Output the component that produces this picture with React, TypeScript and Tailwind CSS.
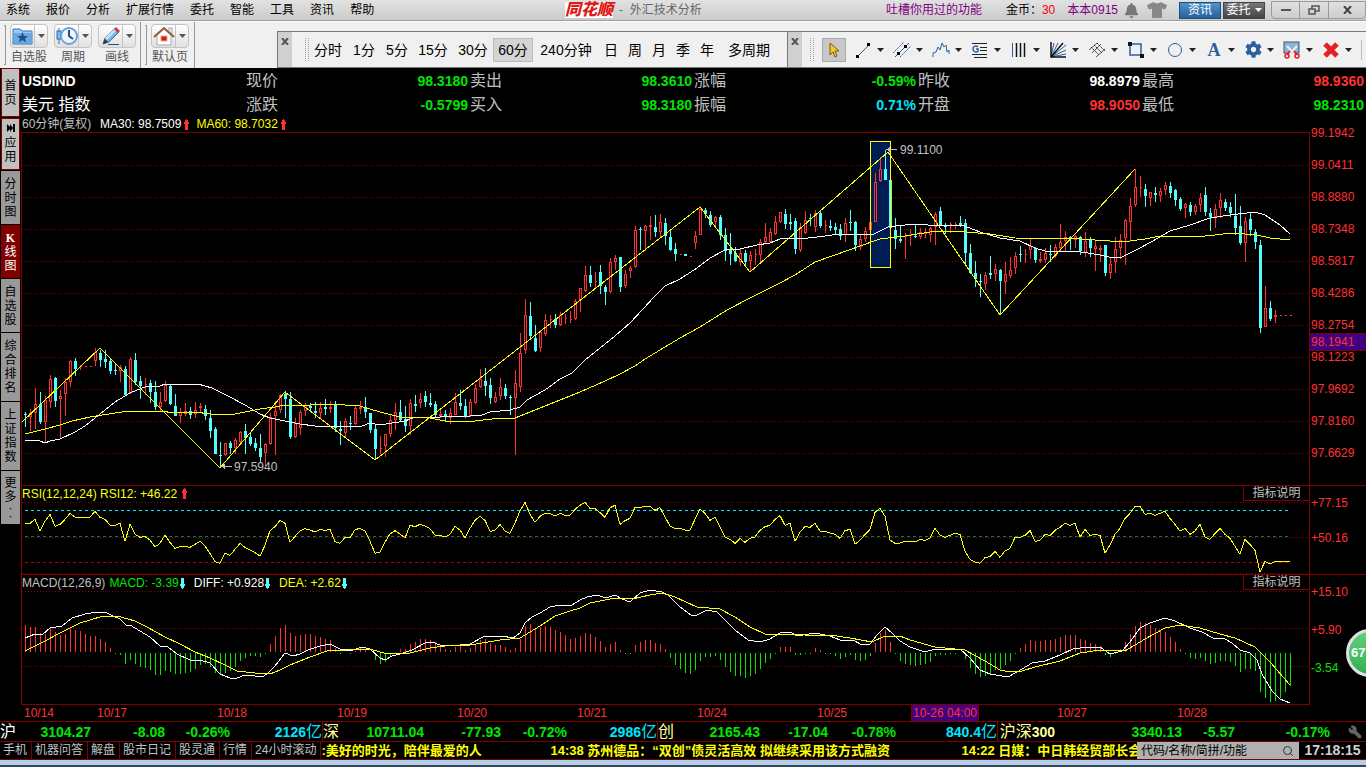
import type { ReactNode } from 'react';
import { Search, Wrench } from 'lucide-react';
import { FaBell, FaCog, FaTshirt } from 'react-icons/fa';

const BAR_STEP = 5;
const FIRST_BAR = 25;

// u = close above open, d = close below open; then high, body top, body bottom, low
const CANDLES = `
d412,414,415,427 u409,413,417,431 u388,404,413,429 d392,404,422,424 u396,400,422,442
u375,379,402,408 d377,378,401,407 u390,396,399,439 u378,382,394,416 u360,361,382,387
d358,361,369,376 u365,366,367,370 u366,366,367,367 u366,366,367,367 u348,352,361,366
d350,353,360,367 d350,359,362,368 d358,361,371,374 d363,370,371,375 u365,367,371,382
d366,369,395,395 u357,359,393,394 d353,360,382,385 d376,381,386,399 u378,384,385,395
d380,383,392,403 d381,392,407,410 u392,402,407,411 u381,385,401,402 d385,386,404,405
d394,406,416,416 u408,412,416,423 u403,411,414,416 d407,411,415,419 u402,410,414,418
u403,406,408,413 d405,409,416,420 d410,418,431,438 d427,429,454,454 d442,455,456,467
u443,443,455,456 d441,443,448,454 u438,440,448,454 u431,432,442,444 d424,431,438,454
d432,437,444,446 d438,443,448,451 d434,448,457,462 u443,444,453,466 u413,417,444,445
u401,411,416,455 u394,395,410,413 d391,394,399,418 d392,399,437,439 u418,423,437,438
u410,412,428,435 u403,405,411,416 d403,406,408,412 d402,411,413,418 u402,408,413,418
d399,407,409,415 u401,407,409,413 d401,404,428,432 d421,429,431,445 u418,421,433,438
d416,423,424,430 u405,408,424,425 u401,407,409,414 d397,408,412,418 d413,413,430,433
d424,429,449,460 u436,448,449,454 u434,434,446,457 u415,420,434,437 u403,412,420,430
d400,412,420,422 d406,419,426,432 u399,403,426,435 d395,404,406,412 u393,399,403,408
d391,396,402,407 d393,403,405,407 d401,404,415,417 u408,414,416,418 d410,414,417,422
u408,413,418,424 u393,402,415,415 d390,403,406,410 d399,406,417,418 u399,402,416,417
u384,388,403,404 u369,379,387,388 d368,381,386,396 d378,385,398,404 u392,397,402,403
u378,387,396,400 d384,388,396,399 d395,397,398,415 u370,383,398,455 u333,353,387,392
u299,315,350,354 d302,316,336,338 d325,338,351,352 u330,332,348,352 u314,320,334,336
u315,319,320,328 d314,319,325,328 u312,315,325,326 u314,318,319,324 u311,319,320,323
u299,301,319,320 u288,288,300,312 u266,275,291,292 d266,275,283,287 u272,281,282,289
d265,272,286,294 d285,287,292,305 u258,262,292,293 u255,258,262,270 d257,257,287,292
u270,274,286,288 u266,268,271,278 u226,230,267,268 d227,229,230,250 u225,226,231,251
u216,225,227,240 d215,227,232,237 u214,222,232,237 d218,223,236,245 d229,237,250,251
d243,249,254,261 u254,254,255,255 d254,254,256,256 u256,256,257,257 u231,236,243,249
u206,209,235,235 d208,210,214,218 d211,215,225,227 u216,217,222,227 d215,217,235,240
d228,235,251,261 d233,250,254,265 d247,253,261,262 u249,253,262,266 d250,253,262,267
u251,255,261,272 u249,254,255,265 u239,242,255,264 u223,237,242,243 u228,232,242,243
u216,222,234,235 u212,212,222,223 d209,214,224,229 d214,222,224,230 d218,221,249,254
u223,227,250,252 u211,220,233,234 d214,218,219,226 u210,213,227,232 d211,213,226,228
u220,225,226,233 d220,226,228,231 d223,227,230,234 d224,229,236,240 u218,223,235,242
d210,222,223,231 d221,222,245,251 u235,239,247,250 u227,231,239,242 u221,222,230,232
u173,182,222,222 u157,169,181,182 d150,169,180,180 d180,180,228,232 d218,230,239,249
d226,239,241,243 u233,236,237,259 u229,235,236,246 d224,236,237,238 u228,232,237,239
u228,232,234,238 u227,228,235,242 u212,214,227,245 d207,211,225,226 d223,225,227,234
u222,224,225,233 u222,224,225,229 d216,223,225,227 d219,223,253,266 d244,253,273,274
d261,273,279,287 d274,281,282,297 u272,275,284,290 d256,273,275,279 u264,269,274,281
d269,270,281,315 u262,274,282,294 u257,270,276,278 u252,256,268,274 d246,254,255,262
u249,254,255,263 u239,246,250,259 d247,248,260,263 u252,259,261,263 u248,253,260,263
d245,254,255,262 u244,247,256,258 u224,242,248,252 u231,237,241,251 d236,237,238,250
u235,236,240,248 d236,237,251,255 u232,241,253,257 d237,239,248,257 u240,246,249,271
u245,248,250,262 d245,245,273,276 u257,264,273,279 u237,249,262,273 u234,240,248,259
u219,220,238,265 u198,206,222,241 u169,187,205,207 u176,187,188,197 d184,189,196,207
u192,192,198,206 d187,193,195,202 u188,191,196,202 u182,185,190,195 d182,186,193,198
d189,190,200,206 d197,199,209,211 u203,204,208,218 d202,205,212,216 u204,206,212,215
u193,198,205,212 d187,195,212,216 d208,213,217,231 u204,209,217,228 u193,200,208,218
d199,202,208,211 d202,207,213,217 d194,216,228,235 d206,226,243,245 u217,221,243,262
d213,219,230,236 d229,232,242,249 d240,245,328,333 u286,308,327,327 d301,308,319,321
u310,315,317,323 u315,315,316,316 u315,315,316,316 u315,315,316,316
`.trim().split(/\s+/).map((item) => ({
  up: item[0] === 'u',
  y: item.slice(1).split(',').map(Number),
}));

const MA30 = '25,440 40,441 45,443 50,441 60,439 75,432 85,426 95,418 105,410 115,402 130,393 137,390 145,387 160,386 165,384 198,384 212,388 230,397 245,405 260,414 270,418 285,421 300,424 315,426 330,426 350,427 362,426 370,423 380,425 405,421 415,417 440,417 470,416 482,415 490,412 510,410 520,407 527,400 545,390 560,379 572,373 585,360 600,348 615,336 630,323 643,309 655,296 665,286 680,279 697,268 710,258 725,250 740,249 757,245 770,243 780,239 790,238 800,239 825,236 840,234 855,234 872,235 888,227 905,225 915,224 940,226 962,225 980,232 1000,238 1020,241 1035,248 1045,251 1075,251 1100,255 1113,258 1122,257 1140,248 1160,237 1170,231 1190,225 1210,218 1230,215 1255,212 1265,215 1280,225 1290,234';
const MA60 = '25,434 45,429 60,425 72,421 90,417 115,413 130,411 160,411 175,413 195,412 210,414 235,414 260,409 275,407 285,405 310,405 325,404 345,405 360,406 380,412 400,417 425,417 445,421 475,421 500,418 515,418 530,412 545,406 565,398 580,392 605,381 620,374 635,366 645,359 660,350 680,338 700,327 727,310 750,298 780,283 795,275 815,262 835,255 860,246 880,239 905,236 930,232 955,231 990,234 1015,238 1080,239 1110,241 1120,242 1130,241 1145,239 1160,236 1195,237 1215,235 1232,233 1257,235 1270,238 1290,240';
const ZIGZAG = '22,422 100,348 220,468 285,392 375,460 700,207 750,272 888,152 1000,315 1135,169';
const DIFF = '25,638 35,634 42,635 50,628 62,626 72,618 85,614 98,612 105,612 113,616 120,619 126,625 130,625 140,631 150,637 160,646 168,647 177,654 190,660 200,660 210,663 220,674 230,678 237,678 245,675 255,676 262,677 267,674 275,666 285,653 293,656 300,654 308,650 320,646 330,644 340,649 350,651 362,647 370,649 380,658 385,660 392,656 400,654 412,650 425,643 432,642 440,645 450,646 460,645 470,644 485,636 493,637 502,636 513,638 520,633 525,623 532,617 540,613 550,607 560,605 572,605 580,600 587,597 597,595 606,598 615,595 622,599 630,602 640,593 650,590 662,592 668,595 680,607 691,615 697,615 707,610 717,612 725,620 735,630 748,640 760,642 770,639 780,633 790,632 797,636 815,633 830,636 840,640 853,640 862,645 870,644 877,635 885,627 892,633 900,641 910,647 925,652 935,649 960,649 970,658 980,670 990,674 1008,677 1017,672 1032,663 1045,661 1060,655 1075,648 1080,648 1100,647 1110,654 1122,651 1130,642 1140,628 1150,623 1165,618 1175,621 1190,628 1202,632 1213,638 1225,639 1232,643 1240,650 1250,653 1257,660 1262,674 1272,691 1280,699 1290,703';
const DEA = '25,651 45,641 60,633 80,623 90,620 103,616 117,616 135,621 147,627 165,637 180,644 195,652 210,658 225,665 237,671 255,673 270,674 280,670 290,665 310,657 330,650 345,650 370,649 387,654 410,653 430,648 445,646 470,645 500,640 520,638 540,626 555,616 570,611 580,608 590,603 605,600 615,598 632,599 650,595 662,593 675,597 697,607 720,609 735,617 750,627 765,634 775,635 790,634 805,635 830,635 850,638 872,642 885,636 900,636 910,640 935,647 965,650 985,661 1000,670 1010,672 1022,671 1035,667 1060,661 1080,653 1100,650 1125,651 1145,639 1165,628 1180,625 1200,628 1220,634 1235,638 1255,647 1270,662 1290,685';

// one sample per bar, in thirds of a pixel
const RSI = [
  130, 130, 118, 153, 124, 103, 139, 133, 118, 100, 111, 111, 111, 111, 94, 112, 118, 135, 136, 130, 184, 133, 163, 172, 170, 180, 201, 190, 165,
  187, 205, 200, 200, 202, 193, 184, 198, 220, 245, 250, 220, 226, 208, 190, 202, 210, 218, 228, 196, 152, 140, 121, 130, 187, 169, 153, 146, 150,
  156, 148, 151, 148, 185, 190, 172, 174, 149, 145, 153, 184, 220, 216, 186, 162, 152, 162, 174, 136, 140, 133, 138, 146, 165, 166, 171, 163, 139,
  150, 174, 145, 121, 109, 121, 154, 151, 133, 153, 160, 129, 93, 67, 103, 127, 109, 100, 100, 108, 100, 106, 106, 88, 76, 67, 85, 86, 98, 112, 83,
  76, 133, 122, 115, 82, 82, 79, 79, 91, 83, 111, 138, 145, 145, 150, 150, 118, 88, 100, 121, 112, 142, 171, 178, 190, 175, 187, 175, 171, 151, 140,
  136, 118, 107, 136, 130, 184, 157, 139, 142, 130, 153, 154, 159, 163, 175, 152, 148, 192, 181, 163, 148, 97, 85, 109, 180, 190,
  189, 184, 184, 186, 179, 181, 174, 145, 165, 172, 166, 160, 163, 214, 238, 246, 250, 233, 230, 214, 232, 213, 205, 172, 172, 166, 151, 184, 181,
  163, 166, 151, 142, 130, 136, 130, 171, 148, 166, 163, 166, 219, 195, 163, 145, 115, 100, 79, 79, 103, 100, 106, 100, 94, 115, 133, 153, 145, 163,
  153, 133, 171, 178, 160, 145, 163, 175, 199, 223, 178, 193, 211, 276, 244, 252, 244, 244, 244, 244,
];

const MACD = [
  435, 441, 441, 460, 462, 443, 457, 464, 462, 448, 451, 453, 463, 468, 468, 478, 487, 504, 519, 525, 552, 540, 552, 560, 564, 570, 585, 585, 573,
  576, 582, 582, 579, 576, 567, 555, 552, 560, 579, 585, 579, 573, 560, 543, 534, 528, 528, 531, 522, 492, 468, 444, 435, 459, 468, 465, 462, 462,
  468, 471, 477, 480, 504, 521, 516, 521, 512, 505, 507, 516, 540, 552, 546, 531, 520, 507, 507, 492, 486, 477, 477, 480, 486, 498, 507, 510, 501,
  498, 510, 504, 495, 480, 477, 489, 495, 495, 501, 510, 504, 477, 438, 432, 444, 441, 438, 441, 450, 456, 465, 477, 474, 468, 459, 462, 471, 483,
  501, 492, 486, 510, 519, 522, 495, 486, 480, 480, 489, 492, 507, 534, 555, 567, 579, 582, 570, 543, 531, 531, 528, 540, 561, 576, 588, 588, 594,
  588, 582, 567, 549, 537, 519, 501, 501, 501, 525, 525, 522, 521, 504, 510, 521, 522, 528, 537, 531, 525, 540, 543, 540, 528, 489, 459, 450, 486,
  522, 543, 552, 555, 558, 555, 552, 546, 528, 525, 525, 522, 521, 516, 537, 564, 582, 591, 588, 582, 570, 567, 555, 543, 522, 504, 492, 480, 483,
  483, 480, 480, 477, 471, 465, 465, 465, 477, 480, 489, 492, 498, 525, 531, 522, 508, 486, 462, 438, 426, 429, 435, 444, 453, 456, 471, 486, 507,
  519, 534, 537, 534, 543, 552, 549, 543, 543, 546, 558, 576, 567, 567, 573, 636, 654, 666, 663, 654, 636, 618,
];

const priceAxis = ['99.1942', '99.0411', '98.8880', '98.7348', '98.5817', '98.4286', '98.2754', '98.1223', '97.9692', '97.8160', '97.6629'];

const menus = ['系统', '报价', '分析', '扩展行情', '委托', '智能', '工具', '资讯', '帮助'];

const periods = [
  { name: '分时', cls: 'w-[38px]' },
  { name: '1分', cls: 'w-[34px]' },
  { name: '5分', cls: 'w-8' },
  { name: '15分', cls: 'w-10' },
  { name: '30分', cls: 'w-10' },
  { name: '60分', cls: 'w-10' },
  { name: '240分钟', cls: 'w-[66px]' },
  { name: '日', cls: 'w-6' },
  { name: '周', cls: 'w-6' },
  { name: '月', cls: 'w-6' },
  { name: '季', cls: 'w-6' },
  { name: '年', cls: 'w-6' },
  { name: '多周期', cls: 'w-[60px]' },
];

const sideTabs = [
  { name: '首页', cls: 'h-[49px] bg-[#c0c0c0] border border-[#800000] text-black' },
  { name: '应用', cls: 'h-[52px] bg-[#c0c0c0] border border-[#800000] text-black' },
  { name: '分时图', cls: 'h-[53px] bg-[#999] text-black' },
  { name: 'K线图', cls: 'h-[53px] bg-[#800000] text-white' },
  { name: '自选股', cls: 'h-[53px] bg-[#999] text-black' },
  { name: '综合排名', cls: 'h-[68px] bg-[#999] text-black' },
  { name: '上证指数', cls: 'h-[68px] bg-[#999] text-black' },
  { name: '更多··', cls: 'h-[53px] bg-[#999] text-black' },
];

const quotes = [
  ['现价', '98.3180', 'text-[#00e600]'],
  ['卖出', '98.3610', 'text-[#00e600]'],
  ['涨幅', '-0.59%', 'text-[#00e600]'],
  ['昨收', '98.8979', 'text-white'],
  ['最高', '98.9360', 'text-[#ff3232]'],
  ['涨跌', '-0.5799', 'text-[#00e600]'],
  ['买入', '98.3180', 'text-[#00e600]'],
  ['振幅', '0.71%', 'text-[#00e6ff]'],
  ['开盘', '98.9050', 'text-[#ff3232]'],
  ['最低', '98.2310', 'text-[#00e600]'],
];

const dates = [
  { name: '10/14', cls: 'w-[73px]' },
  { name: '10/17', cls: 'w-[120px]' },
  { name: '10/18', cls: 'w-[120px]' },
  { name: '10/19', cls: 'w-[120px]' },
  { name: '10/20', cls: 'w-[120px]' },
  { name: '10/21', cls: 'w-[120px]' },
  { name: '10/24', cls: 'w-[120px]' },
  { name: '10/25', cls: 'w-[94px]' },
];

const tickerLinks = ['手机', '机器问答', '解盘', '股市日记', '股灵通', '行情', '24小时滚动'];

function Grip() {
  return (
    <svg width="5" height="24" className="shrink-0" shapeRendering="crispEdges">
      <path d="M1.5 0V24M4.5 0V24" stroke="#a0a0a0" strokeDasharray="1 1" />
    </svg>
  );
}

function Caret() {
  return (
    <svg width="7" height="4" viewBox="0 0 7 4" className="shrink-0">
      <path d="M0 0H7L3.5 4Z" fill="currentColor" />
    </svg>
  );
}

function Arrow({ down = false }: { down?: boolean }) {
  return (
    <svg width="7" height="12" viewBox="0 0 7 12" shapeRendering="crispEdges" className={down ? 'rotate-180 text-[#54fcfc]' : 'text-[#ff3232]'}>
      <path d="M3 0H4V1H5V3H6V5H5V11H2V5H1V3H2V1H3Z" fill="currentColor" />
    </svg>
  );
}

function ToolButton({ label, children }: { label: string; children: ReactNode }) {
  return (
    <button className="flex flex-col items-center text-[#555]">
      <span className="flex h-6 w-[38px] border border-[#c4c4c4] rounded-sm bg-gradient-to-b from-white to-[#e0e0e0]">
        <span className="flex-1 flex items-center justify-center border-r border-[#c4c4c4]">{children}</span>
        <span className="w-3 flex items-center justify-center"><Caret /></span>
      </span>
      <span className="text-[12px] leading-[18px]">{label}</span>
    </button>
  );
}

function FolderIcon() {
  return (
    <svg width="22" height="20" viewBox="0 0 22 20">
      <path d="M1 3H8L10 5H20V18H1Z" fill="#9cc8f2" stroke="#3c78b4" />
      <path d="M2 7H19V17H2Z" fill="#69a9e6" />
      <path d="M10.500 6L12 10H16L13 12.500L14 16.500L10.500 14L7 16.500L8 12.500L5 10H9Z" fill="#1d4f8c" />
    </svg>
  );
}

function ClockIcon() {
  return (
    <svg width="22" height="20" viewBox="0 0 22 20">
      <path d="M3 2V18" stroke="#2b6cb0" />
      <rect x="1" y="5" width="4" height="8" fill="#7ab8f0" stroke="#2b6cb0" />
      <circle cx="13" cy="10" r="8" fill="#eef6fd" stroke="#6ba4da" strokeWidth="2" />
      <path d="M13 4V10L17 13" fill="none" stroke="#2a4f7c" strokeWidth="2" />
    </svg>
  );
}

function PencilIcon() {
  return (
    <svg width="22" height="20" viewBox="0 0 22 20">
      <path d="M3 18L5 12L15 2L19 6L9 16Z" fill="#76b1ea" stroke="#3f6c9b" />
      <path d="M5 12L15 2L17 4L7 14Z" fill="#c5e2fb" />
      <path d="M14 3L16 1L20 5L18 7Z" fill="#d33" />
      <path d="M3 18L5 13L8 16Z" fill="#333" />
      <path d="M8 18.500H19" stroke="#1f4f86" />
    </svg>
  );
}

function HomeIcon() {
  return (
    <svg width="22" height="20" viewBox="0 0 22 20">
      <path d="M4 9L11 3L18 9V19H4Z" fill="#fff" stroke="#aaa" />
      <rect x="16" y="2" width="3" height="5" fill="#eee" stroke="#aaa" />
      <path d="M1 11L11 2L21 11" fill="none" stroke="#9a5a3c" strokeWidth="2" />
      <rect x="8" y="10" width="6" height="5" fill="#cc2200" stroke="#e9a793" />
    </svg>
  );
}

const drawTools: { name: string; icon: ReactNode }[] = [
  { name: '线段', icon: <><path d="M4 15L15 4" stroke="#2b5f9e" /><path d="M2 14H5V17H2ZM13 2H16V5H13Z" fill="#000" /></> },
  { name: '平行线', icon: <><path d="M0 12L11 1M7 16L18 5" stroke="#2b5f9e" strokeDasharray="2 1" /><path d="M2 16L16 2" stroke="#2b5f9e" /><path d="M4 11H7V14H4ZM11 4H14V7H11Z" fill="#000" /></> },
  { name: '波浪', icon: <path d="M1 16V12L4 11L6 6L8 9L10 2L12 6L14 4L15 11L17 9V13" fill="none" stroke="#2b5f9e" /> },
  { name: '黄金分割', icon: <><path d="M1 2.500H16M9 6.500H16M9 9.500H16M1 13.500H16M3 16.500H16" stroke="#222" /><path d="M7 6C5 4 2 5 2 8C2 11 6 12 7 10V8H5" fill="none" stroke="#2b5f9e" strokeWidth="1.500" /></> },
  { name: '周期线', icon: <><path d="M2.500 2V16" stroke="#2b5f9e" /><path d="M6.500 2V16M10.500 2V16M14.500 2V16" stroke="#111" strokeWidth="1.500" /></> },
  { name: '角度线', icon: <><path d="M2 16L5 2M2 16L9 2M2 16L17 4M2 16L17 9M2 16L17 13" stroke="#2b5f9e" /><path d="M2 1V16H17M2 16L14 2" fill="none" stroke="#111" strokeWidth="1.500" /></> },
  { name: '回归通道', icon: <><path d="M1 9L9 2M4 12L13 3M8 16L17 8" stroke="#555" /><path d="M3 6L11 14M6 4L14 12M9 2L17 10" stroke="#222" strokeDasharray="2 1" /></> },
  { name: '矩形', icon: <><rect x="3" y="3" width="11" height="11" fill="none" stroke="#2b5f9e" strokeWidth="1.500" /><path d="M1 1H5V5H1ZM13 13H17V17H13Z" fill="#111" /></> },
  { name: '圆形', icon: <circle cx="9" cy="9" r="6.500" fill="none" stroke="#2b5f9e" /> },
];

function DrawButton({ name, children }: { name: string; children: ReactNode }) {
  return (
    <button aria-label={name} className="w-[39px] h-6 flex items-center gap-1 pl-[3px] shrink-0 text-[#222]">
      <span className="w-5 flex justify-center">{children}</span>
      <Caret />
    </button>
  );
}

function TitleBar() {
  return (
    <header className="relative h-[21px] flex items-center justify-between bg-gradient-to-b from-[#e2e2e2] to-[#cbcbcb] border-b border-[#a0a0a0] text-[12px] leading-5">
      <nav className="flex gap-4 pl-1.5">
        {menus.map((m) => <button key={m}>{m}</button>)}
      </nav>
      <div className="absolute left-[565px] top-0 flex items-center gap-1.5 text-[#666]">
        <span className="w-12 h-4 bg-white text-center text-[16px] leading-[15px] font-black italic text-[#e01818]">同花顺</span>
        <span>-&nbsp; 外汇技术分析</span>
      </div>
      <div className="flex items-center h-5">
        <a href="#feedback" className="text-[#800080] mr-6">吐槽你用过的功能</a>
        <span className="mr-3 flex">金币：<span className="text-[#f00]">30</span></span>
        <a href="#user" className="text-[#800080] mr-1.5">本本0915</a>
        <button aria-label="消息" className="text-[#777] mr-2"><FaBell size={15} /></button>
        <button aria-label="皮肤" className="text-[#888] mr-3"><FaTshirt size={20} /></button>
        <button className="w-[42px] h-[17px] bg-gradient-to-b from-[#4f94cd] to-[#24619d] border border-[#1e4e7c] text-white leading-[15px] mr-0.5">资讯</button>
        <button className="w-[42px] h-[17px] bg-gradient-to-b from-[#777] to-[#444] border border-[#444] text-white leading-[15px] flex items-center justify-center gap-1 mr-1.5">委托<Caret /></button>
        <div className="flex h-[18px] border border-[#999] rounded-b-sm text-[#555]">
          <button aria-label="最小化" className="w-7 border-r border-[#999] flex items-center justify-center"><span className="w-2.5 h-0.5 bg-[#555]" /></button>
          <button aria-label="还原" className="w-[29px] border-r border-[#999] flex items-center justify-center">
            <svg width="12" height="10" viewBox="0 0 12 10"><path d="M1 4H7V9H1ZM4 4V1H11V6H7" fill="none" stroke="#555" strokeWidth="1.500" /></svg>
          </button>
          <button aria-label="关闭" className="w-9 flex items-center justify-center">
            <svg width="9" height="8" viewBox="0 0 9 8"><path d="M1 0L8 8M8 0L1 8" stroke="#444" strokeWidth="2" /></svg>
          </button>
        </div>
      </div>
    </header>
  );
}

function CloseStrip() {
  return (
    <button aria-label="关闭工具栏" className="w-[15px] shrink-0 h-full bg-[#d0d0d0] border-l border-[#777] flex justify-center pt-1.5">
      <svg width="8" height="7" viewBox="0 0 8 7"><path d="M1 0L7 7M7 0L1 7" stroke="#555" strokeWidth="2" /></svg>
    </button>
  );
}

function ToolBar() {
  return (
    <div className="h-[47px] bg-[#f0f0f0] border-t border-white flex items-end">
      <div className="h-full flex items-center shrink-0">
        <div className="w-[141px] h-full flex items-center pl-1 gap-[6px] border-r border-[#999]">
          <span className="w-0.5 h-10 -mr-0.5 border-y border-r border-[#999]" />
          <ToolButton label="自选股"><FolderIcon /></ToolButton>
          <ToolButton label="周期"><ClockIcon /></ToolButton>
          <ToolButton label="画线"><PencilIcon /></ToolButton>
        </div>
        <div className="w-[54px] h-full flex items-center pl-1 gap-1 border-r border-[#999]">
          <span className="w-0.5 h-10 border-y border-r border-[#999]" />
          <ToolButton label="默认页"><HomeIcon /></ToolButton>
        </div>
      </div>
      <div className="ml-[82px] h-[37px] flex-1 flex items-center border-y border-[#777]">
        <CloseStrip />
        <div className="w-[17px] flex justify-end shrink-0"><Grip /></div>
        <div className="flex items-center shrink-0 h-full text-[14px] leading-6">
          {periods.map((p) => (
            <button key={p.name} className={`${p.cls} text-center whitespace-nowrap ${p.name === '60分' ? 'bg-[#d4d4d4] outline outline-[#bbb] -outline-offset-1' : ''}`}>{p.name}</button>
          ))}
        </div>
        <div className="w-2 shrink-0" />
        <CloseStrip />
        <div className="w-3 flex justify-end shrink-0"><Grip /></div>
        <button aria-label="选择" className="ml-2 w-6 h-6 shrink-0 border border-[#aaa] bg-[#c8c8c8] flex items-center justify-center">
          <svg width="12" height="16" viewBox="0 0 12 16"><path d="M2 1V13L5 10L7 15L9 14L7 9H11Z" fill="#f2c62c" stroke="#7a5a10" /></svg>
        </button>
        <div className="flex ml-1">
          {drawTools.map((t) => (
            <DrawButton key={t.name} name={t.name}>
              <svg width="18" height="18" viewBox="0 0 18 18">{t.icon}</svg>
            </DrawButton>
          ))}
          <DrawButton name="文字"><span className="font-['Liberation_Serif',serif] font-bold text-[18px] leading-5 text-[#2b5f9e]">A</span></DrawButton>
          <DrawButton name="设置"><FaCog size={17} className="text-[#2b5f9e]" /></DrawButton>
          <DrawButton name="截图">
            <svg width="18" height="18" viewBox="0 0 18 18">
              <rect x="1" y="1" width="15" height="11" fill="#8fb4d9" stroke="#456" />
              <path d="M4 5L13 15M14 5L5 15" stroke="#eee" strokeWidth="2" />
              <path d="M7 10L4 14M11 10L14 14" stroke="#d22" strokeWidth="2" />
              <circle cx="4" cy="15" r="2" fill="none" stroke="#d22" strokeWidth="1.500" />
              <circle cx="14" cy="15" r="2" fill="none" stroke="#d22" strokeWidth="1.500" />
            </svg>
          </DrawButton>
          <DrawButton name="删除">
            <svg width="16" height="16" viewBox="0 0 16 16"><path d="M2 2L14 14M14 2L2 14" stroke="#e32222" strokeWidth="5" /></svg>
          </DrawButton>
        </div>
        <span className="w-px h-5 ml-auto mr-1 bg-[#bbb]" />
      </div>
    </div>
  );
}

function SideBar() {
  return (
    <aside className="w-[21px] shrink-0 flex flex-col gap-px pl-px pr-px">
      {sideTabs.map((tab) => (
        <button key={tab.name} className={`${tab.cls} shrink-0 flex flex-col items-center justify-center text-[12px] leading-[14px]`}>
          {tab.name === '应用' && (
            <svg width="8" height="8" viewBox="0 0 8 8" className="mb-1"><path d="M0 0L4 4L0 8ZM3 0L6 4L3 8ZM6 0H8V8H6Z" fill="#000" /></svg>
          )}
          {tab.name.split('').map((c, i) => (
            <span key={i} className={c === 'K' ? "font-['Liberation_Serif',serif] font-bold" : c === '·' ? 'leading-[8px]' : ''}>{c}</span>
          ))}
        </button>
      ))}
    </aside>
  );
}

function Dotted({ ys }: { ys: number[] }) {
  return (
    <>
      {ys.map((y) => (
        <path key={y} d={`M22 ${y + 0.5}H1309`} stroke="#8c0000" strokeDasharray="1 2" />
      ))}
    </>
  );
}

function CandleChart() {
  return (
    <svg viewBox="22 133 1287 352" preserveAspectRatio="none" className="block w-full h-[352px]" shapeRendering="crispEdges" fill="none">
      <Dotted ys={[165, 197, 229, 261, 293, 325, 357, 389, 421, 453]} />
      <rect x="870" y="141" width="21" height="127" fill="#001c55" />
      {CANDLES.map(({ up, y: [high, top, bottom, low] }, i) => {
        const x = FIRST_BAR + i * BAR_STEP;
        if (up) {
          const t = top + 0.5;
          const b = Math.max(top, bottom - 1) + 0.5;
          return (
            <path key={i} stroke="#ff3232" d={`M${x + 0.5} ${high}V${top}M${x + 0.5} ${bottom}V${low}M${x - 0.5} ${t}H${x + 1.5}V${b}H${x - 0.5}Z`} />
          );
        }
        return (
          <g key={i} fill="#54fcfc">
            <rect x={x} y={high} width="1" height={low - high} />
            <rect x={x - 1} y={top} width="3" height={Math.max(1, bottom - top)} />
          </g>
        );
      })}
      <polyline points={MA30} stroke="#fff" />
      <polyline points={MA60} stroke="#ff0" />
      <polyline points={ZIGZAG} stroke="#ff0" />
      <rect x="870.500" y="141.500" width="20" height="126" stroke="#ff0" />
      <path d="M221 466.500H232M886 149.500H897" stroke="#c0c0c0" />
      <path d="M221 466.500L225 464V469ZM886 149.500L890 147V152Z" fill="#c0c0c0" />
    </svg>
  );
}

function RsiChart() {
  return (
    <svg viewBox="22 502 1287 72" preserveAspectRatio="none" className="block w-full h-[72px] overflow-visible" shapeRendering="crispEdges" fill="none">
      <Dotted ys={[502, 537, 573]} />
      <path d="M25 510.500H1289" stroke="#00e6ff" strokeDasharray="3 3" />
      <path d="M25 536.500H1289" stroke="#008040" strokeDasharray="3 3" />
      <path d="M25 562.500H1289" stroke="#c00000" strokeDasharray="3 3" />
      <polyline points={RSI.map((v, i) => `${FIRST_BAR + i * BAR_STEP},${480 + v / 3}`).join(' ')} stroke="#ff0" />
    </svg>
  );
}

function MacdChart() {
  return (
    <svg viewBox="22 591 1287 113" preserveAspectRatio="none" className="block w-full h-[113px] overflow-visible" shapeRendering="crispEdges" fill="none">
      <Dotted ys={[591, 628, 666]} />
      {MACD.map((v, i) => {
        const end = 480 + Math.round(v / 3);
        const up = v < 518;
        return (
          <rect
            key={i}
            x={FIRST_BAR + i * BAR_STEP}
            y={up ? end : 653}
            width="1"
            height={up ? 652 - end : Math.max(1, end - 653)}
            fill={up ? '#ff3232' : '#00e600'}
          />
        );
      })}
      <polyline points={DIFF} stroke="#fff" />
      <polyline points={DEA} stroke="#ff0" />
    </svg>
  );
}

function PanelHead({ children }: { children: ReactNode }) {
  return (
    <div className="h-4 flex items-start justify-between whitespace-nowrap">
      <div className="flex items-center leading-4">{children}</div>
      <button className="w-[66px] h-[15px] border-l border-b border-[#800000] text-[#c0c0c0] leading-[15px]">指标说明</button>
    </div>
  );
}

function QuoteHeader() {
  return (
    <div className="mt-px h-12 grid grid-cols-6 grid-rows-2 text-[16px] leading-6">
      <h1 className="font-bold text-[14px] text-white">USDIND</h1>
      {quotes.map(([label, value, color], i) => (
        <div key={label} className={`flex justify-between pr-0.5 text-[#c0c0c0] ${i === 5 ? 'col-start-2' : ''}`}>
          <span>{label}</span>
          <span className={`font-bold text-[14px] ${color}`}>{value}</span>
        </div>
      ))}
      <h2 className="row-start-2 col-start-1 text-white">美元 指数</h2>
    </div>
  );
}

function Charts() {
  return (
    <main className="flex-1 min-w-0 text-[12px]">
      <div className="border-l border-transparent">
        <QuoteHeader />
        <div className="h-[15px] flex items-center leading-[15px] text-[#c0c0c0] whitespace-nowrap">
          <span className="w-[78px]">60分钟(复权)</span>
          <span className="text-white mr-0.5">MA30: 98.7509</span><Arrow />
          <span className="text-[#ff0] ml-1.5 mr-0.5">MA60: 98.7032</span><Arrow />
        </div>
      </div>

      <section className="flex">
        <div className="relative flex-1 min-w-0 border-l border-t border-r border-[#800000]">
          <CandleChart />
          <span className="absolute left-[878px] top-[9px] leading-4 text-[#c0c0c0]">99.1100</span>
          <span className="absolute left-[212px] top-[326px] leading-4 text-[#c0c0c0]">97.5940</span>
        </div>
        <div className="relative w-14 h-[353px] pl-px text-[#ff3232]">
          <div className="-mt-[15px]">
            {priceAxis.map((p) => <div key={p} className="h-8 leading-8">{p}</div>)}
          </div>
          <div className="absolute left-0 right-0 top-[201px] h-[18px] pl-px leading-4 bg-[#400080] border-y border-[#800000]">98.1941</div>
        </div>
      </section>

      <section className="flex border-t border-[#800000]">
        <div className="flex-1 min-w-0 border-x border-[#800000]">
          <PanelHead>
            <span className="text-[#ff0] mr-1">RSI(12,12,24) RSI12: +46.22</span><Arrow />
          </PanelHead>
          <RsiChart />
        </div>
        <div className="w-14 pl-px pt-2 text-[#ff3232] leading-[18px] flex flex-col gap-[17px]">
          <span>+77.15</span>
          <span>+50.16</span>
        </div>
      </section>

      <section className="flex border-t border-[#800000]">
        <div className="flex-1 min-w-0 border-x border-b border-[#800000]">
          <PanelHead>
            <span className="text-[#c0c0c0] mr-1">MACD(12,26,9)</span>
            <span className="text-[#00e600]">MACD: -3.39</span><Arrow down />
            <span className="text-white ml-2">DIFF: +0.928</span><Arrow down />
            <span className="text-[#ff0] ml-2">DEA: +2.62</span><Arrow down />
          </PanelHead>
          <MacdChart />
        </div>
        <div className="w-14 pl-px pt-2 text-[#ff3232] leading-[18px] flex flex-col gap-5">
          <span>+15.10</span>
          <span>+5.90</span>
          <span className="text-[#00e600]">-3.54</span>
        </div>
      </section>

      <div className="h-4 flex pl-[3px] leading-4 text-[#ff3232] whitespace-nowrap">
        {dates.map((d) => <span key={d.name} className={`${d.cls} shrink-0`}>{d.name}</span>)}
        <span className="w-[68px] shrink-0 text-center bg-[#400080] border-x border-[#800000]">10-26 04:00</span>
        <span className="w-[78px] shrink-0" />
        <span className="w-[120px] shrink-0">10/27</span>
        <span>10/28</span>
      </div>
    </main>
  );
}

function IndexBar() {
  return (
    <div className="h-[21px] flex border-y border-[#800000] text-[14px] leading-5 font-bold text-right text-[#00e600] whitespace-nowrap">
      <div className="w-[323px] flex border-r border-[#800000]">
        <span className="w-4 text-[16px] font-normal text-white">沪</span>
        <span className="w-[75px]">3104.27</span>
        <span className="w-[74px]">-8.08</span>
        <span className="w-[65px]">-0.26%</span>
        <span className="flex-1 text-[#00e6ff]">2126<span className="text-[16px] font-normal">亿</span></span>
      </div>
      <div className="w-[335px] flex border-r border-[#800000]">
        <span className="w-4 text-[16px] font-normal text-[#ffff99]">深</span>
        <span className="w-[85px]">10711.04</span>
        <span className="w-[77px]">-77.93</span>
        <span className="w-[66px]">-0.72%</span>
        <span className="flex-1 text-[#00e6ff]">2986<span className="text-[16px] font-normal">亿</span></span>
      </div>
      <div className="w-[340px] flex border-r border-[#800000]">
        <span className="w-4 text-[16px] font-normal text-[#ffff99]">创</span>
        <span className="w-[86px]">2165.43</span>
        <span className="w-[68px]">-17.04</span>
        <span className="w-[68px]">-0.78%</span>
        <span className="flex-1 text-[#00e6ff]">840.4<span className="text-[16px] font-normal">亿</span></span>
      </div>
      <div className="flex-1 flex items-center">
        <span className="w-[57px] text-[#ffff99]"><span className="text-[16px] font-normal">沪深</span>300</span>
        <span className="w-[127px]">3340.13</span>
        <span className="w-[53px]">-5.57</span>
        <span className="w-[95px]">-0.17%</span>
        <button aria-label="工具" className="flex-1 flex justify-end pr-1 text-[#666]"><Wrench size={14} fill="#666" className="-scale-x-100" /></button>
      </div>
    </div>
  );
}

function Ticker() {
  return (
    <footer className="h-[18px] flex text-[12px] leading-[17px] border-b border-[#800000] whitespace-nowrap">
      <nav className="flex text-[#c0c0c0] shrink-0">
        {tickerLinks.map((t) => <a key={t} href="#news" className="pl-[3px] pr-1 border-r border-[#800000]">{t}</a>)}
      </nav>
      <div className="flex-1 min-w-0 flex overflow-hidden font-bold text-[13px] text-[#ff0]">
        <span className="w-[229px] shrink-0">:美好的时光，陪伴最爱的人</span>
        <span className="w-[411px] shrink-0">14:38 苏州德品：“双创”债灵活高效 拟继续采用该方式融资</span>
        <span>14:22 日媒：中日韩经贸部长会议</span>
      </div>
      <label className="w-[162px] shrink-0 flex items-center bg-[#b0b0b0] text-[#333]">
        <input type="text" aria-label="搜索" placeholder="代码/名称/简拼/功能" className="w-[145px] pl-1 leading-4 placeholder:text-black outline-none" />
        <Search size={12} />
      </label>
      <time className="w-[67px] shrink-0 text-center font-bold text-[14px] text-[#d0d0d0]">17:18:15</time>
    </footer>
  );
}

export default function App() {
  return (
    <div className="relative overflow-hidden w-full bg-black text-black font-['Liberation_Sans','Noto_Sans_CJK_SC',sans-serif]">
      <TitleBar />
      <ToolBar />
      <div className="flex">
        <SideBar />
        <Charts />
      </div>
      <IndexBar />
      <Ticker />
      <div className="h-[7px] bg-[#b5d0ea] border-b-2 border-[#35465a]" />
      <button className="absolute top-[629px] -right-7 size-12 rounded-full border-[3px] border-[#e0e0e0] bg-gradient-to-b from-[#5fd080] to-[#2fb050] text-white font-bold text-[13px] text-left pl-0.5">67</button>
    </div>
  );
}
